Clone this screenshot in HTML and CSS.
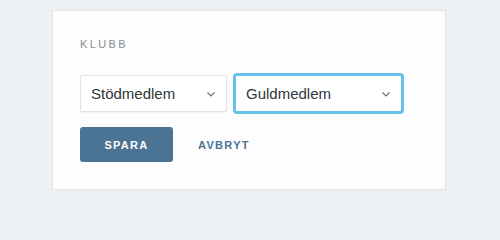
FILE: index.html
```html
<!DOCTYPE html>
<html lang="sv">
<head>
<meta charset="utf-8">
<link rel="stylesheet" href="styles.css">
</head>
<body>
<div class="card">
  <div class="label">KLUBB</div>
  <div class="selects">
    <div class="select">
      <span>Stödmedlem</span>
      <svg class="chev" width="8" height="5" viewBox="0 0 8 5"><path d="M0.5 0.5 L4 4 L7.5 0.5" fill="none" stroke="#6b737a" stroke-width="1.2"/></svg>
    </div>
    <div class="select focus">
      <span>Guldmedlem</span>
      <svg class="chev" width="8" height="5" viewBox="0 0 8 5"><path d="M0.5 0.5 L4 4 L7.5 0.5" fill="none" stroke="#6b737a" stroke-width="1.2"/></svg>
    </div>
  </div>
  <div class="actions">
    <button class="btn primary">SPARA</button>
    <button class="btn link">AVBRYT</button>
  </div>
</div>
</body>
</html>
```
FILE: styles.css
```css
html, body {
  margin: 0;
  padding: 0;
}
body {
  background: #edf0f3;
  font-family: "Liberation Sans", Arial, sans-serif;
  width: 500px;
  height: 200px;
  padding-top: 10px;
  box-sizing: border-box;
}
.card {
  margin-left: 52px;
  width: 394px;
  height: 180px;
  box-sizing: border-box;
  background: #fdfdfd;
  border: 1px solid #e2e6e9;
  padding: 27px 0 0 27px;
}
.label {
  font-size: 11px;
  line-height: 13px;
  letter-spacing: 2.4px;
  color: #868d94;
}
.selects {
  display: flex;
  gap: 8px;
  margin-top: 24px;
}
.select {
  box-sizing: border-box;
  height: 37px;
  width: 147px;
  border: 1px solid #dfe3e6;
  border-radius: 2px;
  background: #fff;
  display: flex;
  align-items: center;
  justify-content: space-between;
  padding: 0 11px 0 10px;
  font-size: 15px;
  color: #30363c;
  box-shadow: 0 1px 1px rgba(0,0,0,0.04);
}
.select.focus {
  width: 167px;
  border-color: #66c2ea;
  box-shadow: 0 0 0 2px #66c2ea;
  border-radius: 2px;
}
.chev {
  display: block;
  margin-top: 1px;
}
.actions {
  display: flex;
  align-items: center;
  gap: 25px;
  margin-top: 15px;
}
.btn {
  font-family: "Liberation Sans", Arial, sans-serif;
  font-weight: bold;
  font-size: 11px;
  letter-spacing: 1.3px;
  border: none;
  cursor: pointer;
}
.primary {
  background: #4a7394;
  color: #fff;
  width: 93px;
  height: 35px;
  border-radius: 3px;
  padding: 0;
}
.link {
  background: none;
  color: #4a7394;
  padding: 0;
}
```
